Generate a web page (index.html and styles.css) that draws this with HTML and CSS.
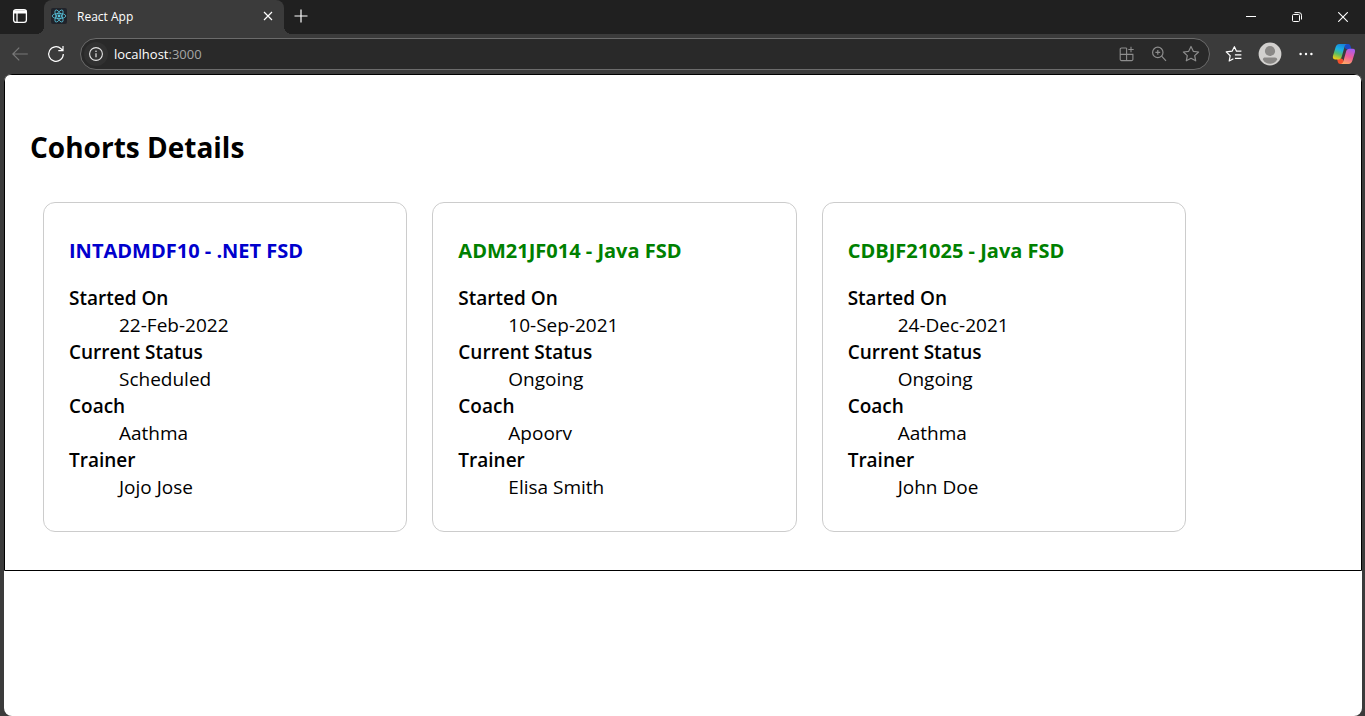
FILE: index.html
```html
<!DOCTYPE html>
<html lang="en">
<head>
<meta charset="utf-8">
<title>React App</title>
<link rel="stylesheet" href="styles.css">
</head>
<body>
<div class="browser">
  <header class="titlebar">
    <button class="icon-btn tab-actions" aria-label="Tab actions">
      <svg width="16" height="16" viewBox="0 0 16 16" fill="none" stroke="#fff" stroke-width="1.3"><rect x="1.6" y="1.6" width="12.8" height="12.8" rx="2.4"/><path d="M1.6 3.2h12.8M2 4.4h12" stroke-width="2"/><path d="M5 5v9.4"/></svg>
    </button>
    <div class="tab">
      <svg class="favicon" width="16" height="16" viewBox="0 0 16 16"><rect width="16" height="16" rx="2" fill="#20232a"/><g fill="none" stroke="#58c4dc" stroke-width=".8"><ellipse cx="8" cy="8" rx="6.8" ry="2.6"/><ellipse cx="8" cy="8" rx="6.8" ry="2.6" transform="rotate(60 8 8)"/><ellipse cx="8" cy="8" rx="6.8" ry="2.6" transform="rotate(120 8 8)"/></g><circle cx="8" cy="8" r="1.4" fill="#58c4dc"/></svg>
      <span class="tab-title">React App</span>
      <button class="icon-btn tab-close" aria-label="Close tab">
        <svg width="10" height="10" viewBox="0 0 10 10" stroke="#fff" stroke-width="1.2"><path d="M1 1l8 8M9 1l-8 8"/></svg>
      </button>
    </div>
    <button class="icon-btn new-tab" aria-label="New tab">
      <svg width="14" height="14" viewBox="0 0 14 14" stroke="#fff" stroke-width="1.2"><path d="M7 .5v13M.5 7h13"/></svg>
    </button>
    <div class="window-controls">
      <button class="icon-btn" aria-label="Minimize"><svg width="10" height="10" viewBox="0 0 10 10" stroke="#fff"><path d="M0 4.5h10"/></svg></button>
      <button class="icon-btn" aria-label="Restore"><svg width="10" height="10" viewBox="0 0 10 10" fill="none" stroke="#fff"><rect x=".5" y="2.5" width="7" height="7" rx="1"/><path d="M2.5.6h4.4a2.6 2.6 0 0 1 2.6 2.6v4.3"/></svg></button>
      <button class="icon-btn" aria-label="Close"><svg width="10" height="10" viewBox="0 0 10 10" stroke="#fff" stroke-width="1.1"><path d="M.2.2l9.6 9.6M9.8.2L.2 9.8"/></svg></button>
    </div>
  </header>

  <div class="toolbar">
    <button class="icon-btn nav-btn" aria-label="Back"><svg width="16" height="14" viewBox="0 0 16 14" fill="none" stroke="#797979" stroke-width="1.2"><path d="M15.8 7H1M7.2.6L.8 7l6.4 6.4"/></svg></button>
    <button class="icon-btn nav-btn" aria-label="Refresh"><svg width="18" height="18" viewBox="0 0 18 18" fill="none" stroke="#fff" stroke-width="1.2"><path d="M16.3 9A7.3 7.3 0 1 1 14 3.7L16 5.5M16 1v4.7h-4.7"/></svg></button>
    <div class="address">
      <button class="icon-btn site-info" aria-label="Site information"><svg width="14" height="14" viewBox="0 0 14 14" fill="none" stroke="#e4e4e4"><circle cx="7" cy="7" r="6.4" stroke-width="1.1"/><path d="M7 6.2v4" stroke-width="1.2"/><circle cx="7" cy="4.2" r=".8" fill="#e4e4e4" stroke="none"/></svg></button>
      <a class="url" href="#">localhost<span class="port">:3000</span></a>
      <div class="address-actions">
        <button class="icon-btn" aria-label="Apps"><svg width="16" height="16" viewBox="0 0 16 16" fill="none" stroke="#8d8d8d" stroke-width="1.1"><path d="M7.6 2H2.5A1.3 1.3 0 0 0 1.2 3.3v10a1.3 1.3 0 0 0 1.3 1.3h10.1a1.3 1.3 0 0 0 1.3-1.3V8.4H1.2M7.6 2v12.6M12 .8v5.4M9.3 3.5h5.4"/></svg></button>
        <button class="icon-btn" aria-label="Zoom"><svg width="16" height="16" viewBox="0 0 16 16" fill="none" stroke="#8d8d8d" stroke-width="1.2"><circle cx="6.8" cy="6.4" r="5.2"/><path d="M10.6 10.2l4.4 4.6M6.8 4v4.8M4.4 6.4h4.8"/></svg></button>
        <button class="icon-btn" aria-label="Add to favorites"><svg width="18" height="18" viewBox="0 0 18 18" fill="none" stroke="#8d8d8d" stroke-width="1.2" stroke-linejoin="round"><path d="M9 1.5l2.3 4.8 5.3.7-3.9 3.6 1 5.2L9 13.3l-4.7 2.5 1-5.2L1.4 7l5.3-.7z"/></svg></button>
      </div>
    </div>
    <div class="toolbar-actions">
      <button class="icon-btn" aria-label="Favorites"><svg width="18" height="18" viewBox="0 0 18 18" fill="none" stroke="#fff" stroke-width="1.2" stroke-linejoin="round"><path d="M16.4 6.2h-4.9L9.4 1.700 7.100 6.200l-5.900.7 4 3.800-1 5.300L8.400 13.700M9.900 9.900H16.400M9.900 13.300H16.400"/></svg></button>
      <button class="icon-btn" aria-label="Profile"><svg width="24" height="24" viewBox="0 0 24 24"><circle cx="12" cy="12" r="11.4" fill="#d2d0ce"/><circle cx="12" cy="9" r="5.1" fill="#8a8886"/><path d="M4.8 17.6C4.8 16 6 15.4 7 15.4h10c1.2 0 2.2.7 2.2 2.2C17.5 20.5 15 21.8 12 21.8S6.500 20.500 4.800 17.600z" fill="#8a8886"/></svg></button>
      <button class="icon-btn" aria-label="Settings and more"><svg width="14" height="4" viewBox="0 0 14 4" fill="#fff"><circle cx="1.6" cy="2" r="1.2"/><circle cx="7" cy="2" r="1.2"/><circle cx="12.4" cy="2" r="1.2"/></svg></button>
      <button class="icon-btn copilot" aria-label="Copilot"><svg width="24" height="22" viewBox="0 0 24 22">
        <defs>
          <linearGradient id="cool" x1=".6" y1="0" x2=".25" y2="1"><stop offset="0" stop-color="#1784d8"/><stop offset=".35" stop-color="#19b1e6"/><stop offset=".65" stop-color="#57bd68"/><stop offset="1" stop-color="#f3cd12"/></linearGradient>
          <linearGradient id="warm" x1=".7" y1="0" x2=".35" y2="1"><stop offset="0" stop-color="#a45cf0"/><stop offset=".5" stop-color="#ee5c9a"/><stop offset="1" stop-color="#ffa765"/></linearGradient>
        </defs>
        <path d="M13 1h3.3c1.2 0 1.8.8 2.2 2l1 3.3H15c-1.6 0-2.4-2-2.8-3.3z" fill="#1b49c4"/>
        <path d="M11 21H8.2c-1.2 0-2-.8-2.4-2L5 15.500h4c1.800 0 2.300 1.500 2.800 3z" fill="#f4512d"/>
        <path d="M7.4 1h8C13.2 1 12.8 2.7 12.3 4.4l-2.5 9c-.6 2-1.5 3-3.3 3H3C1 16.4.5 14.6 1 12.8L3.5 4.5C4.2 2.3 5.2 1 7.4 1z" fill="url(#cool)"/>
        <path d="M16.5 21h-8c2.2 0 2.6-1.7 3.1-3.4l2.5-9c.6-2 1.5-2.8 3.3-2.8h3.5c2 0 2.5 1.6 2 3.4l-2.5 8.3c-.7 2.200-1.700 3.500-3.900 3.500z" fill="url(#warm)"/>
      </svg></button>
    </div>
  </div>

  <div class="viewport">
    <main class="cohorts">
      <h1>Cohorts Details</h1>
      <div class="cards">
        <section class="card">
          <h3 class="scheduled">INTADMDF10 - .NET FSD</h3>
          <dl><dt>Started On</dt><dd>22-Feb-2022</dd><dt>Current Status</dt><dd>Scheduled</dd><dt>Coach</dt><dd>Aathma</dd><dt>Trainer</dt><dd>Jojo Jose</dd></dl>
        </section>
        <section class="card">
          <h3 class="ongoing">ADM21JF014 - Java FSD</h3>
          <dl><dt>Started On</dt><dd>10-Sep-2021</dd><dt>Current Status</dt><dd>Ongoing</dd><dt>Coach</dt><dd>Apoorv</dd><dt>Trainer</dt><dd>Elisa Smith</dd></dl>
        </section>
        <section class="card">
          <h3 class="ongoing">CDBJF21025 - Java FSD</h3>
          <dl><dt>Started On</dt><dd>24-Dec-2021</dd><dt>Current Status</dt><dd>Ongoing</dd><dt>Coach</dt><dd>Aathma</dd><dt>Trainer</dt><dd>John Doe</dd></dl>
        </section>
      </div>
    </main>
  </div>
</div>
</body>
</html>
```
FILE: styles.css
```css
* { box-sizing: border-box; }

body {
  margin: 0;
  background: #3b3b3b;
  color: #000;
  font-family: "Open Sans", "Noto Sans", sans-serif;
}

.browser {
  display: flex;
  flex-direction: column;
  min-height: 100vh;
}

.icon-btn {
  display: flex;
  align-items: center;
  justify-content: center;
  flex: none;
  padding: 0;
  border: 0;
  background: none;
}

/* Title bar */
.titlebar {
  display: flex;
  height: 34px;
  background: #202020;
}

.tab-actions {
  width: 44px;
  padding: 0 4px 2px 0;
}

.tab {
  position: relative;
  display: flex;
  align-items: center;
  gap: 10px;
  width: 240px;
  padding: 0 11px 2px 7px;
  border-radius: 8px 8px 0 0;
  background: #3b3b3b;
  color: #fff;
  font-size: 12px;
}

.tab::before,
.tab::after {
  content: "";
  position: absolute;
  bottom: 0;
  width: 8px;
  height: 8px;
}

.tab::before {
  right: 100%;
  background: radial-gradient(circle at 0 0, #202020 8px, #3b3b3b 8px);
}

.tab::after {
  left: 100%;
  background: radial-gradient(circle at 100% 0, #202020 8px, #3b3b3b 8px);
}

.tab-title { flex: 1; }

.new-tab {
  width: 34px;
  padding-bottom: 2px;
}

.window-controls {
  display: flex;
  margin-left: auto;
}

.window-controls .icon-btn {
  width: 46px;
  padding-left: 2px;
}

/* Toolbar */
.toolbar {
  display: flex;
  align-items: center;
  height: 40px;
  padding: 0 9px 0 2px;
}

.nav-btn { width: 36px; }

.address {
  display: flex;
  flex: 1;
  align-items: center;
  height: 32px;
  margin-left: 6px;
  padding: 0 8px 0 3px;
  border: 1px solid #6b6b6b;
  border-radius: 16px;
  background: #292929;
}

.site-info {
  width: 24px;
  height: 24px;
  border-radius: 50%;
  background: #313131;
}

.url {
  margin-left: 6px;
  color: #fff;
  font-size: 13px;
  text-decoration: none;
}

.port { color: #a6a6a6; }

.address-actions {
  display: flex;
  margin-left: auto;
}

.address-actions .icon-btn {
  width: 32px;
  height: 24px;
}

.address-actions .icon-btn:last-child { margin-right: -6px; }

.toolbar-actions {
  display: flex;
  margin-left: 6px;
}

.toolbar-actions .icon-btn {
  width: 36px;
  height: 32px;
}

.toolbar-actions .copilot {
  width: 40px;
  margin-right: -8px;
}

/* Page */
.viewport {
  flex: 1;
  margin: 0 3px 0 4px;
  overflow: hidden;
  border-radius: 8px;
  background: #fff;
}

.cohorts {
  padding: 50px 25px 38px;
  border: 1px solid #000;
  border-radius: 6px 6px 0 0;
}

h1 {
  margin: 0;
  font-size: 28px;
  line-height: 44px;
}

.cards {
  display: grid;
  grid-template-columns: repeat(3, 1fr);
  gap: 25px;
  max-width: 1143px;
  margin: 33px 13px 0;
}

.card {
  padding: 34px 25px 30px;
  border: 1px solid #ccc;
  border-radius: 12px;
}

h3 {
  margin: 0 0 20px;
  font-size: 20px;
  line-height: 28px;
}

.scheduled { color: #0000cd; }
.ongoing { color: #008000; }

dl {
  margin: 0;
  font-size: 19px;
  line-height: 27px;
}

dt { font-weight: 600; }
dd { margin-left: 50px; }
```
